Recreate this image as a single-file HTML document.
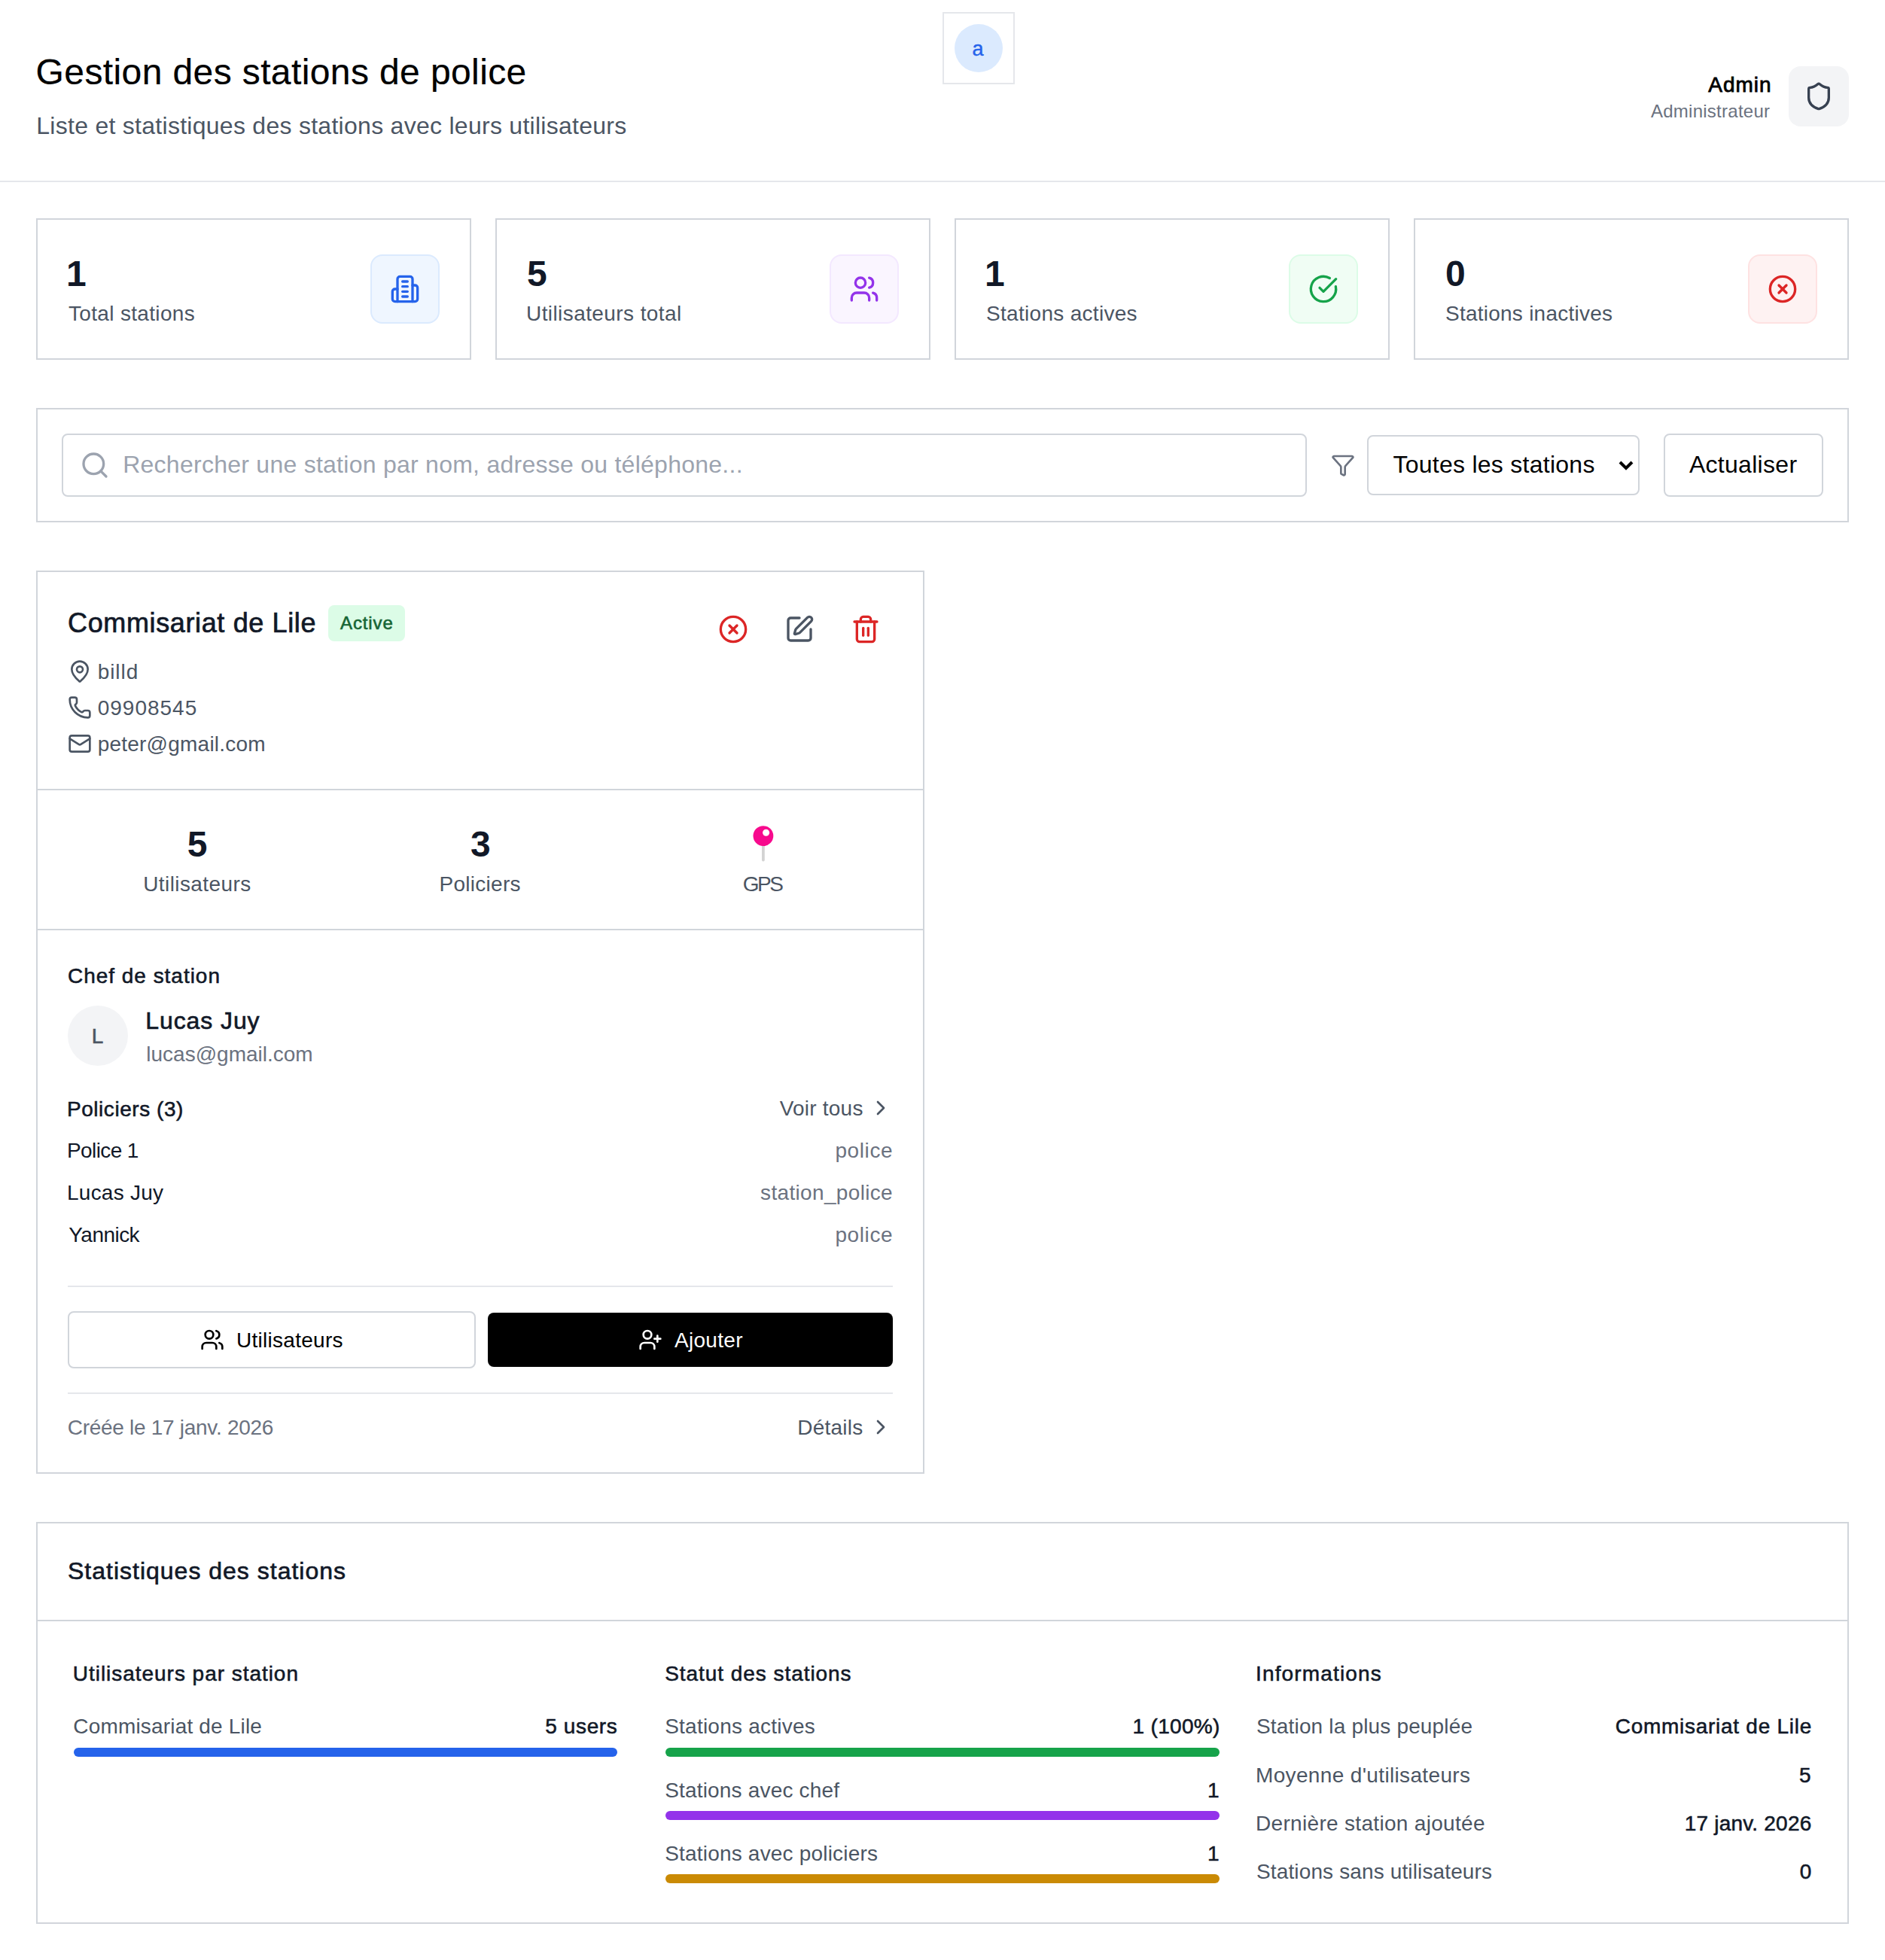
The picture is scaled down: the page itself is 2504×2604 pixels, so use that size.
<!DOCTYPE html>
<html lang="fr">
<head>
<meta charset="utf-8">
<title>Gestion des stations de police</title>
<style>
html,body{margin:0;padding:0;background:#fff}
body{font-family:"Liberation Sans", sans-serif}
#page{width:2504px;height:2604px;position:relative;overflow:hidden;background:#fff}
.b{position:absolute;box-sizing:border-box}
.i{position:absolute;display:block;overflow:visible}
.t{position:absolute;white-space:nowrap;display:block;margin:0;padding:0;font-weight:400}
header,main,section,article{display:block;margin:0;padding:0}
</style>
</head>
<body>
<div id="page">
<header>
<div class="b" style="left:0px;top:240px;width:2504px;height:2px;background:#e5e7eb"></div>
<div class="b" style="left:1252px;top:16px;width:96px;height:96px;border:2px solid #e5e7eb"></div>
<div class="b" style="left:1268px;top:32px;width:64px;height:64px;background:#dbeafe;border-radius:50%"></div>
<div class="b" style="left:2376px;top:88px;width:80px;height:80px;background:#f3f4f6;border-radius:16px"></div>
<svg class="i" style="left:2396px;top:108px" width="40" height="40" viewBox="0 0 24 24" fill="none" stroke="#374151" stroke-width="2" stroke-linecap="round" stroke-linejoin="round"><path d="M20 13c0 5-3.5 7.5-7.66 8.95a1 1 0 0 1-.67-.01C7.5 20.5 4 18 4 13V6a1 1 0 0 1 1-1c2 0 4.5-1.2 6.24-2.72a1.17 1.17 0 0 1 1.52 0C14.51 3.81 17 5 19 5a1 1 0 0 1 1 1z"/></svg>
<h1 class="t" style="left:47.60px;top:69.00px;font-size:48px;line-height:53px;color:#000000;letter-spacing:0.390px;-webkit-text-stroke:0.2px #000000;">Gestion des stations de police</h1>
<p class="t" style="left:48.30px;top:148.70px;font-size:32px;line-height:36px;color:#4b5563;letter-spacing:0.274px;">Liste et statistiques des stations avec leurs utilisateurs</p>
<span class="t" style="left:1291.50px;top:50.20px;font-size:27px;line-height:30px;color:#2563eb;-webkit-text-stroke:0.4px #2563eb;">a</span>
<span class="t" style="left:2269.30px;top:96.80px;font-size:28px;line-height:31px;color:#000000;letter-spacing:0.977px;-webkit-text-stroke:0.8px #000000;">Admin</span>
<span class="t" style="left:2193.00px;top:134.00px;font-size:24px;line-height:27px;color:#6b7280;letter-spacing:0.252px;">Administrateur</span>
</header>
<main>
<section class="stat-cards">
<div class="b" style="left:48px;top:290px;width:578px;height:188px;border:2px solid #d1d5db"></div>
<div class="b" style="left:492px;top:338px;width:92px;height:92px;background:#eff6ff;border:2px solid #dbeafe;border-radius:16px"></div>
<svg class="i" style="left:518px;top:364px" width="40" height="40" viewBox="0 0 24 24" fill="none" stroke="#2563eb" stroke-width="2" stroke-linecap="round" stroke-linejoin="round"><path d="M6 22V4a2 2 0 0 1 2-2h8a2 2 0 0 1 2 2v18Z"/><path d="M6 12H4a2 2 0 0 0-2 2v6a2 2 0 0 0 2 2h2"/><path d="M18 9h2a2 2 0 0 1 2 2v9a2 2 0 0 1-2 2h-2"/><path d="M10 6h4"/><path d="M10 10h4"/><path d="M10 14h4"/><path d="M10 18h4"/></svg>
<div class="b" style="left:658px;top:290px;width:578px;height:188px;border:2px solid #d1d5db"></div>
<div class="b" style="left:1102px;top:338px;width:92px;height:92px;background:#faf5ff;border:2px solid #f3e8ff;border-radius:16px"></div>
<svg class="i" style="left:1128px;top:364px" width="40" height="40" viewBox="0 0 24 24" fill="none" stroke="#9333ea" stroke-width="2" stroke-linecap="round" stroke-linejoin="round"><path d="M16 21v-2a4 4 0 0 0-4-4H6a4 4 0 0 0-4 4v2"/><circle cx="9" cy="7" r="4"/><path d="M22 21v-2a4 4 0 0 0-3-3.87"/><path d="M16 3.13a4 4 0 0 1 0 7.75"/></svg>
<div class="b" style="left:1268px;top:290px;width:578px;height:188px;border:2px solid #d1d5db"></div>
<div class="b" style="left:1712px;top:338px;width:92px;height:92px;background:#f0fdf4;border:2px solid #dcfce7;border-radius:16px"></div>
<svg class="i" style="left:1738px;top:364px" width="40" height="40" viewBox="0 0 24 24" fill="none" stroke="#16a34a" stroke-width="2" stroke-linecap="round" stroke-linejoin="round"><path d="M21.801 10A10 10 0 1 1 17 3.335"/><path d="m9 11 3 3L22 4"/></svg>
<div class="b" style="left:1878px;top:290px;width:578px;height:188px;border:2px solid #d1d5db"></div>
<div class="b" style="left:2322px;top:338px;width:92px;height:92px;background:#fef2f2;border:2px solid #fee2e2;border-radius:16px"></div>
<svg class="i" style="left:2348px;top:364px" width="40" height="40" viewBox="0 0 24 24" fill="none" stroke="#dc2626" stroke-width="2" stroke-linecap="round" stroke-linejoin="round"><circle cx="12" cy="12" r="10"/><path d="m15 9-6 6"/><path d="m9 9 6 6"/></svg>
<span class="t" style="left:88.00px;top:336.50px;font-size:48px;line-height:53px;color:#111827;font-weight:700;">1</span>
<span class="t" style="left:91.00px;top:400.50px;font-size:28px;line-height:31px;color:#4b5563;letter-spacing:0.329px;">Total stations</span>
<span class="t" style="left:700.00px;top:336.50px;font-size:48px;line-height:53px;color:#111827;font-weight:700;">5</span>
<span class="t" style="left:699.00px;top:400.50px;font-size:28px;line-height:31px;color:#4b5563;letter-spacing:0.414px;">Utilisateurs total</span>
<span class="t" style="left:1308.00px;top:336.50px;font-size:48px;line-height:53px;color:#111827;font-weight:700;">1</span>
<span class="t" style="left:1310.00px;top:400.50px;font-size:28px;line-height:31px;color:#4b5563;letter-spacing:0.300px;">Stations actives</span>
<span class="t" style="left:1920.00px;top:336.50px;font-size:48px;line-height:53px;color:#111827;font-weight:700;">0</span>
<span class="t" style="left:1920.00px;top:400.50px;font-size:28px;line-height:31px;color:#4b5563;letter-spacing:0.242px;">Stations inactives</span>
</section>
<section class="filters">
<div class="b" style="left:48px;top:542px;width:2408px;height:152px;border:2px solid #d1d5db"></div>
<div class="b" style="left:82px;top:576px;width:1654px;height:84px;border:2px solid #d1d5db;border-radius:8px"></div>
<svg class="i" style="left:106px;top:598px" width="40" height="40" viewBox="0 0 24 24" fill="none" stroke="#9ca3af" stroke-width="2" stroke-linecap="round" stroke-linejoin="round"><circle cx="11" cy="11" r="8"/><path d="m21 21-4.3-4.3"/></svg>
<svg class="i" style="left:1768px;top:602px" width="32" height="32" viewBox="0 0 24 24" fill="none" stroke="#6b7280" stroke-width="2" stroke-linecap="round" stroke-linejoin="round"><path d="M10 20a1 1 0 0 0 .553.895l2 1A1 1 0 0 0 14 21v-7a2 2 0 0 1 .517-1.341L21.74 4.67A1 1 0 0 0 21 3H3a1 1 0 0 0-.742 1.67l7.225 7.989A2 2 0 0 1 10 14z"/></svg>
<div class="b" style="left:1816px;top:578px;width:362px;height:80px;border:2px solid #d1d5db;border-radius:8px"></div>
<svg class="i" style="left:2148px;top:606px" width="24" height="24" viewBox="0 0 24 24" fill="none" stroke="#000" stroke-width="4" stroke-linecap="butt" stroke-linejoin="miter"><path d="M4 8l8 8 8-8"/></svg>
<div class="b" style="left:2210px;top:576px;width:212px;height:84px;border:2px solid #d1d5db;border-radius:8px"></div>
<span class="t" style="left:163.20px;top:599.40px;font-size:32px;line-height:36px;color:#9ca3af;letter-spacing:0.259px;">Rechercher une station par nom, adresse ou téléphone...</span>
<span class="t" style="left:1850.40px;top:599.40px;font-size:32px;line-height:36px;color:#000000;letter-spacing:0.264px;">Toutes les stations</span>
<span class="t" style="left:2243.90px;top:599.40px;font-size:32px;line-height:36px;color:#000000;letter-spacing:0.295px;">Actualiser</span>
</section>
<article class="station-card">
<div class="b" style="left:48px;top:758px;width:1180px;height:1200px;border:2px solid #d1d5db"></div>
<div class="b" style="left:50px;top:1048px;width:1176px;height:2px;background:#d1d5db"></div>
<div class="b" style="left:50px;top:1234px;width:1176px;height:2px;background:#d1d5db"></div>
<div class="b" style="left:436px;top:804px;width:102px;height:48px;background:#dcfce7;border-radius:8px"></div>
<svg class="i" style="left:954px;top:816px" width="40" height="40" viewBox="0 0 24 24" fill="none" stroke="#dc2626" stroke-width="2" stroke-linecap="round" stroke-linejoin="round"><circle cx="12" cy="12" r="10"/><path d="m15 9-6 6"/><path d="m9 9 6 6"/></svg>
<svg class="i" style="left:1042px;top:816px" width="40" height="40" viewBox="0 0 24 24" fill="none" stroke="#4b5563" stroke-width="2" stroke-linecap="round" stroke-linejoin="round"><path d="M12 3H5a2 2 0 0 0-2 2v14a2 2 0 0 0 2 2h14a2 2 0 0 0 2-2v-7"/><path d="M18.375 2.625a1 1 0 0 1 3 3l-9.013 9.014a2 2 0 0 1-.853.505l-2.873.84a.5.5 0 0 1-.62-.62l.84-2.873a2 2 0 0 1 .506-.852z"/></svg>
<svg class="i" style="left:1130px;top:816px" width="40" height="40" viewBox="0 0 24 24" fill="none" stroke="#dc2626" stroke-width="2" stroke-linecap="round" stroke-linejoin="round"><path d="M3 6h18"/><path d="M19 6v14c0 1-1 2-2 2H7c-1 0-2-1-2-2V6"/><path d="M8 6V4c0-1 1-2 2-2h4c1 0 2 1 2 2v2"/><path d="M10 11v6"/><path d="M14 11v6"/></svg>
<svg class="i" style="left:90px;top:876px" width="32" height="32" viewBox="0 0 24 24" fill="none" stroke="#4b5563" stroke-width="2" stroke-linecap="round" stroke-linejoin="round"><path d="M20 10c0 4.993-5.539 10.193-7.399 11.799a1 1 0 0 1-1.202 0C9.539 20.193 4 14.993 4 10a8 8 0 0 1 16 0"/><circle cx="12" cy="10" r="3"/></svg>
<svg class="i" style="left:90px;top:924px" width="32" height="32" viewBox="0 0 24 24" fill="none" stroke="#4b5563" stroke-width="2" stroke-linecap="round" stroke-linejoin="round"><path d="M13.832 16.568a1 1 0 0 0 1.213-.303l.355-.465A2 2 0 0 1 17 15h3a2 2 0 0 1 2 2v3a2 2 0 0 1-2 2A18 18 0 0 1 2 4a2 2 0 0 1 2-2h3a2 2 0 0 1 2 2v3a2 2 0 0 1-.8 1.6l-.468.351a1 1 0 0 0-.292 1.233 14 14 0 0 0 6.392 6.384"/></svg>
<svg class="i" style="left:90px;top:972px" width="32" height="32" viewBox="0 0 24 24" fill="none" stroke="#4b5563" stroke-width="2" stroke-linecap="round" stroke-linejoin="round"><rect width="20" height="16" x="2" y="4" rx="2"/><path d="m22 7-8.97 5.7a1.94 1.94 0 0 1-2.06 0L2 7"/></svg>
<svg class="i" style="left:994px;top:1090px" width="40" height="60" viewBox="0 0 40 60"><rect x="18" y="30" width="3.8" height="24.5" rx="1.9" fill="#d3d3d3"/><circle cx="19.9" cy="20.6" r="13.4" fill="#f70a8d"/><circle cx="23.6" cy="16.2" r="4.5" fill="#fff"/></svg>
<div class="b" style="left:90px;top:1336px;width:80px;height:80px;background:#f3f4f6;border-radius:50%"></div>
<svg class="i" style="left:1154px;top:1456px" width="32" height="32" viewBox="0 0 24 24" fill="none" stroke="#4b5563" stroke-width="2" stroke-linecap="round" stroke-linejoin="round"><path d="m9 18 6-6-6-6"/></svg>
<div class="b" style="left:90px;top:1708px;width:1096px;height:2px;background:#e5e7eb"></div>
<div class="b" style="left:90px;top:1742px;width:542px;height:76px;border:2px solid #d1d5db;border-radius:8px"></div>
<svg class="i" style="left:266px;top:1764px" width="32" height="32" viewBox="0 0 24 24" fill="none" stroke="#000" stroke-width="2" stroke-linecap="round" stroke-linejoin="round"><path d="M16 21v-2a4 4 0 0 0-4-4H6a4 4 0 0 0-4 4v2"/><circle cx="9" cy="7" r="4"/><path d="M22 21v-2a4 4 0 0 0-3-3.87"/><path d="M16 3.13a4 4 0 0 1 0 7.75"/></svg>
<div class="b" style="left:648px;top:1744px;width:538px;height:72px;background:#000;border-radius:8px"></div>
<svg class="i" style="left:848px;top:1764px" width="32" height="32" viewBox="0 0 24 24" fill="none" stroke="#fff" stroke-width="2" stroke-linecap="round" stroke-linejoin="round"><path d="M16 21v-2a4 4 0 0 0-4-4H6a4 4 0 0 0-4 4v2"/><circle cx="9" cy="7" r="4"/><path d="M19 8v6"/><path d="M22 11h-6"/></svg>
<div class="b" style="left:90px;top:1850px;width:1096px;height:2px;background:#e5e7eb"></div>
<svg class="i" style="left:1154px;top:1880px" width="32" height="32" viewBox="0 0 24 24" fill="none" stroke="#4b5563" stroke-width="2" stroke-linecap="round" stroke-linejoin="round"><path d="m9 18 6-6-6-6"/></svg>
<h3 class="t" style="left:90.00px;top:807.30px;font-size:36px;line-height:41px;color:#111827;letter-spacing:0.634px;-webkit-text-stroke:0.7px #111827;">Commisariat de Lile</h3>
<span class="t" style="left:452.00px;top:813.80px;font-size:24px;line-height:27px;color:#166534;letter-spacing:0.878px;-webkit-text-stroke:0.6px #166534;">Active</span>
<span class="t" style="left:129.70px;top:877.00px;font-size:28px;line-height:31px;color:#4b5563;letter-spacing:0.941px;">billd</span>
<span class="t" style="left:129.70px;top:925.20px;font-size:28px;line-height:31px;color:#4b5563;letter-spacing:0.999px;">09908545</span>
<span class="t" style="left:129.70px;top:973.00px;font-size:28px;line-height:31px;color:#4b5563;letter-spacing:0.221px;">peter@gmail.com</span>
<span class="t" style="left:248.70px;top:1095.00px;font-size:48px;line-height:53px;color:#111827;font-weight:700;">5</span>
<span class="t" style="left:190.20px;top:1159.00px;font-size:28px;line-height:31px;color:#4b5563;letter-spacing:0.411px;">Utilisateurs</span>
<span class="t" style="left:625.00px;top:1095.00px;font-size:48px;line-height:53px;color:#111827;font-weight:700;">3</span>
<span class="t" style="left:583.50px;top:1159.00px;font-size:28px;line-height:31px;color:#4b5563;letter-spacing:0.274px;">Policiers</span>
<span class="t" style="left:986.80px;top:1159.00px;font-size:28px;line-height:31px;color:#4b5563;letter-spacing:-2.528px;">GPS</span>
<h4 class="t" style="left:90.00px;top:1281.00px;font-size:28px;line-height:31px;color:#111827;letter-spacing:0.973px;-webkit-text-stroke:0.55px #111827;">Chef de station</h4>
<span class="t" style="left:121.80px;top:1361.00px;font-size:28px;line-height:31px;color:#4b5563;-webkit-text-stroke:0.55px #4b5563;">L</span>
<span class="t" style="left:193.30px;top:1338.00px;font-size:32px;line-height:36px;color:#111827;letter-spacing:0.903px;-webkit-text-stroke:0.65px #111827;">Lucas Juy</span>
<span class="t" style="left:194.30px;top:1385.00px;font-size:28px;line-height:31px;color:#6b7280;">lucas@gmail.com</span>
<h4 class="t" style="left:89.00px;top:1457.50px;font-size:28px;line-height:31px;color:#111827;letter-spacing:0.543px;-webkit-text-stroke:0.55px #111827;">Policiers (3)</h4>
<span class="t" style="left:1035.70px;top:1456.60px;font-size:28px;line-height:31px;color:#4b5563;letter-spacing:0.219px;">Voir tous</span>
<span class="t" style="left:89.00px;top:1512.80px;font-size:28px;line-height:31px;color:#111827;letter-spacing:-0.606px;">Police 1</span>
<span class="t" style="left:1109.40px;top:1512.80px;font-size:28px;line-height:31px;color:#6b7280;letter-spacing:0.623px;">police</span>
<span class="t" style="left:89.00px;top:1568.70px;font-size:28px;line-height:31px;color:#111827;letter-spacing:0.241px;">Lucas Juy</span>
<span class="t" style="left:1010.10px;top:1568.70px;font-size:28px;line-height:31px;color:#6b7280;letter-spacing:0.334px;">station_police</span>
<span class="t" style="left:91.30px;top:1624.70px;font-size:28px;line-height:31px;color:#111827;letter-spacing:-0.539px;">Yannick</span>
<span class="t" style="left:1109.40px;top:1624.70px;font-size:28px;line-height:31px;color:#6b7280;letter-spacing:0.623px;">police</span>
<span class="t" style="left:314.00px;top:1765.00px;font-size:28px;line-height:31px;color:#000000;letter-spacing:0.274px;">Utilisateurs</span>
<span class="t" style="left:895.90px;top:1765.00px;font-size:28px;line-height:31px;color:#ffffff;letter-spacing:0.318px;">Ajouter</span>
<span class="t" style="left:89.80px;top:1881.00px;font-size:28px;line-height:31px;color:#6b7280;letter-spacing:-0.290px;">Créée le 17 janv. 2026</span>
<span class="t" style="left:1059.20px;top:1881.00px;font-size:28px;line-height:31px;color:#4b5563;letter-spacing:0.236px;">Détails</span>
</article>
<section class="statistics">
<div class="b" style="left:48px;top:2022px;width:2408px;height:534px;border:2px solid #d1d5db"></div>
<div class="b" style="left:50px;top:2152px;width:2404px;height:2px;background:#d1d5db"></div>
<div class="b" style="left:98px;top:2322px;width:722px;height:12px;background:#2563eb;border-radius:6px"></div>
<div class="b" style="left:884px;top:2322px;width:736px;height:12px;background:#16a34a;border-radius:6px"></div>
<div class="b" style="left:884px;top:2406px;width:736px;height:12px;background:#9333ea;border-radius:6px"></div>
<div class="b" style="left:884px;top:2490px;width:736px;height:12px;background:#ca8a04;border-radius:6px"></div>
<h2 class="t" style="left:90.00px;top:2069.40px;font-size:32px;line-height:36px;color:#111827;letter-spacing:0.997px;-webkit-text-stroke:0.65px #111827;">Statistiques des stations</h2>
<h4 class="t" style="left:96.80px;top:2207.50px;font-size:28px;line-height:31px;color:#111827;letter-spacing:0.964px;-webkit-text-stroke:0.55px #111827;">Utilisateurs par station</h4>
<span class="t" style="left:97.30px;top:2278.30px;font-size:28px;line-height:31px;color:#4b5563;letter-spacing:0.175px;">Commisariat de Lile</span>
<span class="t" style="left:724.20px;top:2278.30px;font-size:28px;line-height:31px;color:#111827;letter-spacing:0.630px;-webkit-text-stroke:0.55px #111827;">5 users</span>
<h4 class="t" style="left:883.20px;top:2207.50px;font-size:28px;line-height:31px;color:#111827;letter-spacing:0.947px;-webkit-text-stroke:0.55px #111827;">Statut des stations</h4>
<span class="t" style="left:883.20px;top:2278.30px;font-size:28px;line-height:31px;color:#4b5563;letter-spacing:0.227px;">Stations actives</span>
<span class="t" style="left:1504.60px;top:2278.30px;font-size:28px;line-height:31px;color:#111827;letter-spacing:0.302px;-webkit-text-stroke:0.55px #111827;">1 (100%)</span>
<span class="t" style="left:883.20px;top:2362.70px;font-size:28px;line-height:31px;color:#4b5563;letter-spacing:0.175px;">Stations avec chef</span>
<span class="t" style="left:1604.00px;top:2362.70px;font-size:28px;line-height:31px;color:#111827;-webkit-text-stroke:0.55px #111827;">1</span>
<span class="t" style="left:883.20px;top:2446.70px;font-size:28px;line-height:31px;color:#4b5563;letter-spacing:0.192px;">Stations avec policiers</span>
<span class="t" style="left:1604.00px;top:2446.70px;font-size:28px;line-height:31px;color:#111827;-webkit-text-stroke:0.55px #111827;">1</span>
<h4 class="t" style="left:1668.00px;top:2207.50px;font-size:28px;line-height:31px;color:#111827;letter-spacing:1.148px;-webkit-text-stroke:0.55px #111827;">Informations</h4>
<span class="t" style="left:1669.00px;top:2278.30px;font-size:28px;line-height:31px;color:#4b5563;letter-spacing:0.170px;">Station la plus peuplée</span>
<span class="t" style="left:2145.70px;top:2278.30px;font-size:28px;line-height:31px;color:#111827;letter-spacing:0.731px;-webkit-text-stroke:0.55px #111827;">Commisariat de Lile</span>
<span class="t" style="left:1668.00px;top:2342.50px;font-size:28px;line-height:31px;color:#4b5563;letter-spacing:0.347px;">Moyenne d&#x27;utilisateurs</span>
<span class="t" style="left:2390.00px;top:2342.50px;font-size:28px;line-height:31px;color:#111827;-webkit-text-stroke:0.55px #111827;">5</span>
<span class="t" style="left:1668.00px;top:2406.60px;font-size:28px;line-height:31px;color:#4b5563;letter-spacing:0.316px;">Dernière station ajoutée</span>
<span class="t" style="left:2237.70px;top:2406.60px;font-size:28px;line-height:31px;color:#111827;letter-spacing:0.209px;-webkit-text-stroke:0.55px #111827;">17 janv. 2026</span>
<span class="t" style="left:1669.00px;top:2470.60px;font-size:28px;line-height:31px;color:#4b5563;letter-spacing:0.132px;">Stations sans utilisateurs</span>
<span class="t" style="left:2390.70px;top:2470.60px;font-size:28px;line-height:31px;color:#111827;-webkit-text-stroke:0.55px #111827;">0</span>
</section>
</main>
</div>
<script>(function(){var w=window.innerWidth||0;if(w>0&&Math.abs(w-2504)>2){document.getElementById("page").style.zoom=w/2504;}})();</script>
</body>
</html>
